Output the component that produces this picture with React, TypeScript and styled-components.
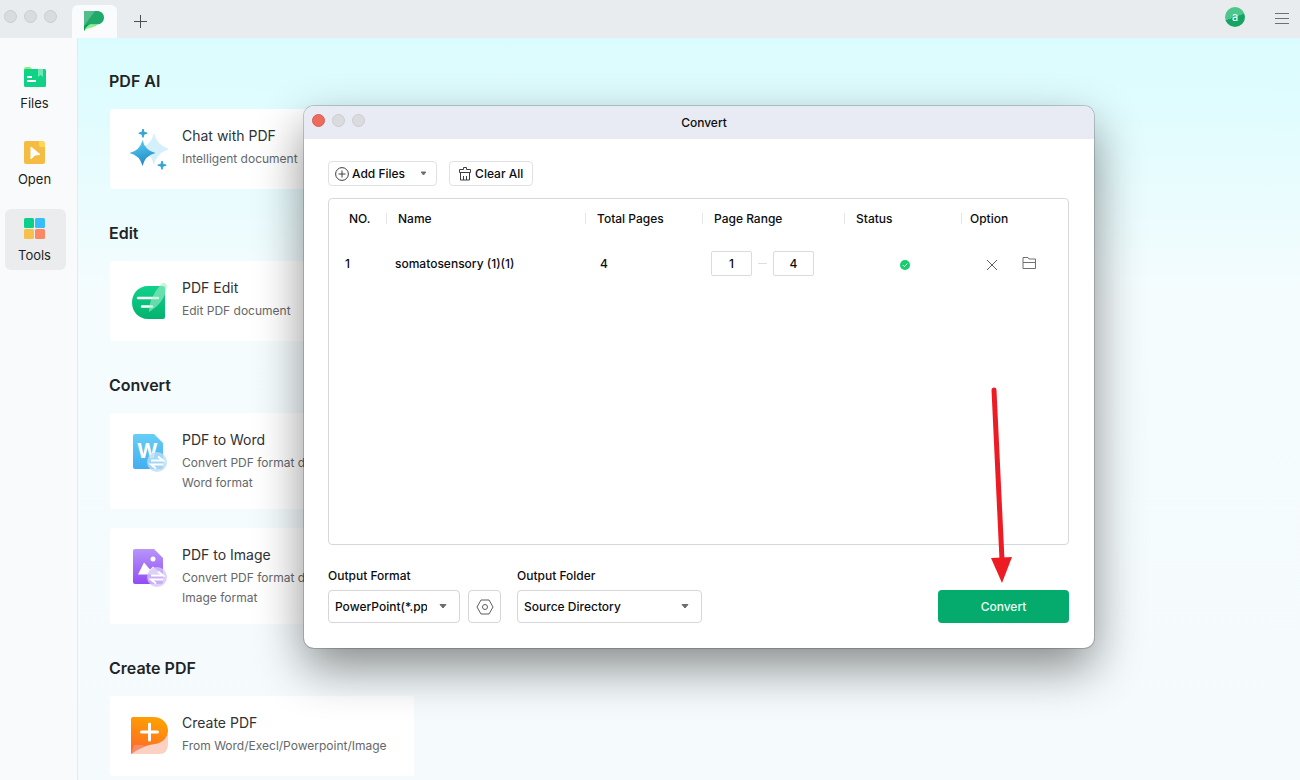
import React from 'react';
import styled, { createGlobalStyle } from 'styled-components';

const GlobalStyle = createGlobalStyle`
  *, *::before, *::after { box-sizing: border-box; }
  body { margin: 0; overflow: hidden; }
  body, button, input, select {
    font-family: Inter, "Liberation Sans", sans-serif;
    font-size: 12px;
    color: #0c0d0e;
  }
  button { cursor: pointer; }
`;

const Window = styled.div`
  position: relative;
  display: flex;
  flex-direction: column;
  height: 100vh;
  overflow: hidden;
`;

const TitleBar = styled.header`
  display: flex;
  align-items: flex-end;
  flex: 0 0 38px;
  height: 38px;
  padding: 0 10px 0 4px;
  background: #e9ecee;
`;

const WindowDots = styled.div`
  display: flex;
  align-self: flex-start;
  gap: 7px;
  width: 68px;
  padding-top: 10px;
`;

const Dot = styled.button<{ $close?: boolean }>`
  width: 13px;
  height: 13px;
  padding: 0;
  border: 1px solid ${p => (p.$close ? '#dd5b52' : '#cbcdd0')};
  border-radius: 50%;
  background: ${p => (p.$close ? '#ed6a5f' : '#d9dbde')};
`;

const HomeTab = styled.button`
  display: flex;
  align-items: center;
  justify-content: center;
  width: 45px;
  height: 33px;
  padding: 0 2px 2px 0;
  border: 0;
  border-radius: 6px 6px 0 0;
  background: #f9fbfd;
`;

const BarButton = styled.button`
  display: flex;
  align-items: center;
  justify-content: center;
  width: 16px;
  height: 36px;
  padding: 0;
  border: 0;
  background: none;
`;

const NewTab = styled(BarButton)`
  height: 34px;
  margin-left: 15px;
`;

const Account = styled.button`
  width: 20px;
  height: 20px;
  margin: 0 29px 11px auto;
  padding: 0;
  border: 0;
  border-radius: 50%;
  background: linear-gradient(160deg, #4cc68c 50%, #17a463 50%);
  color: #fff;
  font-size: 11px;
  line-height: 20px;
`;

const Body = styled.div`
  display: flex;
  flex: 1;
  min-height: 0;
`;

const Sidebar = styled.nav`
  display: flex;
  flex-direction: column;
  flex: 0 0 78px;
  gap: 15px;
  padding: 19px 0 0 5px;
  border-right: 1px solid #e6eaed;
  background: #f9fafc;
`;

const NavItem = styled.button<{ $active?: boolean }>`
  display: flex;
  flex-direction: column;
  align-items: center;
  gap: 3px;
  width: 61px;
  height: 61px;
  padding: 7px 2px 0 0;
  border: 0;
  border-radius: 6px;
  background: ${p => (p.$active ? '#ebecee' : 'transparent')};
  font-size: 13px;
  line-height: 20px;
  color: #1c1e20;
`;

const Main = styled.main`
  flex: 1;
  padding: 31px 30px 0 31px;
  overflow: hidden;
  background: linear-gradient(#dbfcfe 0, #dffcfe 60px, #f5fcfe 260px, #f5fbfd 100%);
`;

const Section = styled.section`
  margin-bottom: 32px;
`;

const SectionTitle = styled.h2`
  margin: 0 0 16px;
  font-size: 16px;
  font-weight: 600;
  line-height: 24px;
  color: #1f2427;
`;

const CardList = styled.div`
  display: flex;
  flex-direction: column;
  gap: 19px;
  padding-left: 1px;
`;

const Card = styled.a`
  display: flex;
  gap: 14px;
  width: 304px;
  min-height: 80px;
  padding: 16px 10px 16px 18px;
  border-radius: 3px;
  background: #fff;
  text-decoration: none;
`;

const CardText = styled.div`
  flex: 1;
`;

const CardTitle = styled.h3`
  margin: 0 0 2px;
  font-size: 14px;
  font-weight: 400;
  line-height: 22px;
  color: #2f3235;
`;

const CardDescription = styled.p`
  margin: 0;
  font-size: 12px;
  line-height: 20px;
  color: #65686b;
`;

const Dialog = styled.div`
  position: absolute;
  top: 106px;
  left: 304px;
  right: 206px;
  border-radius: 10px;
  background: #fff;
  box-shadow: 0 0 0 1px rgba(0, 0, 0, 0.18), 0 20px 48px rgba(0, 0, 0, 0.45);
`;

const DialogBar = styled.div`
  display: grid;
  grid-template-columns: 1fr auto 1fr;
  height: 33px;
  padding: 0 8px;
  border-radius: 10px 10px 0 0;
  background: #e8ebf3;
`;

const DialogDots = styled(WindowDots)`
  padding-top: 8px;
`;

const DialogTitle = styled.h1`
  margin: 0 0 0 10px;
  font-size: 12px;
  font-weight: 500;
  line-height: 33px;
`;

const DialogBody = styled.div`
  padding: 22px 25px 25px 24px;
`;

const Toolbar = styled.div`
  display: flex;
  gap: 12px;
  margin-bottom: 12px;
`;

const ToolButton = styled.button<{ $menu?: boolean }>`
  display: flex;
  align-items: center;
  gap: 3px;
  height: 25px;
  padding: 0 9px 0 ${p => (p.$menu ? '6px' : '8px')};
  border: 1px solid #dfe1e5;
  border-radius: 4px;
  background: #fff;
  font-weight: 500;
  white-space: nowrap;

  & > svg:last-child:not(:first-child) {
    margin-left: 12px;
  }
`;

const FileBox = styled.div`
  height: 347px;
  border: 1px solid #d6d8da;
  border-radius: 4px;
`;

const FileTable = styled.table`
  width: 100%;
  table-layout: fixed;
  border-collapse: collapse;
`;

const HeadCell = styled.th<{ $width?: number; $pad?: number }>`
  width: ${p => (p.$width ? `${p.$width}px` : 'auto')};
  height: 38px;
  padding: 0;
  font-weight: 500;
  text-align: left;

  & > span {
    display: block;
    padding-left: ${p => p.$pad ?? 11}px;
    border-left: 1px solid #e4e5e7;
    line-height: 11px;
  }
  &:first-child > span {
    border-left-color: transparent;
  }
`;

const Cell = styled.td<{ $pad?: number }>`
  height: 52px;
  padding: 0 0 0 ${p => p.$pad ?? 9}px;
  font-weight: 500;
`;

const Range = styled.div`
  display: flex;
  align-items: center;
  gap: 6px;
`;

const RangeDash = styled.span`
  width: 9px;
  height: 1px;
  background: #dcdee0;
`;

const PageInput = styled.input`
  width: 41px;
  height: 25px;
  padding: 0;
  border: 1px solid #d9dbdd;
  border-radius: 2px;
  background: #fff;
  text-align: center;
  font-weight: 500;
`;

const StatusMark = styled.div`
  display: flex;
  justify-content: center;
  padding-top: 3px;
`;

const RowActions = styled.div`
  display: flex;
  align-items: flex-end;
  gap: 24px;
`;

const IconButton = styled.button`
  display: flex;
  padding: 0;
  border: 0;
  background: none;
`;

const OutputRow = styled.div`
  display: flex;
  align-items: flex-end;
  margin-top: 21px;
`;

const Field = styled.div<{ $width: number }>`
  width: ${p => p.$width}px;
`;

const FieldLabel = styled.label`
  display: block;
  margin-bottom: 4px;
  line-height: 20px;
  font-weight: 500;
`;

const SelectBox = styled.div`
  display: grid;
  align-items: center;

  & > * { grid-area: 1 / 1; }
  & > svg {
    justify-self: end;
    margin: 0 13px 2px 0;
    pointer-events: none;
  }
`;

const Select = styled.select`
  appearance: none;
  width: 100%;
  height: 33px;
  padding: 0 32px 0 6px;
  border: 1px solid #d4d6d8;
  border-radius: 4px;
  background: #fff;
  font-weight: 500;
`;

const SettingsButton = styled.button`
  display: flex;
  align-items: center;
  justify-content: center;
  width: 33px;
  height: 33px;
  margin: 0 16px 0 8px;
  padding: 0;
  border: 1px solid #d4d6d8;
  border-radius: 4px;
  background: #fff;
`;

const ConvertButton = styled.button`
  width: 131px;
  height: 33px;
  margin-left: auto;
  border: 0;
  border-radius: 4px;
  background: #04ab6c;
  color: #f0fbf6;
  font-weight: 500;
`;

const Pointer = styled.svg`
  position: absolute;
  right: 80px;
  bottom: 65px;
  pointer-events: none;
`;

const Caret = () => (
  <svg width="8" height="8" viewBox="0 0 8 8" aria-hidden="true">
    <path d="M1 2.500h6L4 6z" fill="#6b6d70" stroke="#6b6d70" strokeWidth="1" strokeLinejoin="round" />
  </svg>
);

const SmallCaret = () => (
  <svg width="7" height="7" viewBox="0 0 7 7" aria-hidden="true">
    <path d="M1.200 2h4.600L3.500 5z" fill="#6b6d70" stroke="#6b6d70" strokeWidth="1" strokeLinejoin="round" />
  </svg>
);

const LogoIcon = () => (
  <svg width="22" height="22" viewBox="0 0 22 22" aria-hidden="true">
    <path d="M5 15l-4 6c3-3 6-3 9-4 2-.500 3-1 4-2z" fill="#86f47c" />
    <path d="M1 1h13c4 0 7 2.500 7 6.500S18 14.500 14 14.500H8c-3 0-5 2.500-7 6.500z" fill="#1faa6b" />
    <path d="M1 1h11L1 16z" fill="#55bd8c" />
    <path d="M1 21V16l7-3c-3 2-5 4-7 8z" fill="#0e9a58" />
  </svg>
);

const FilesIcon = () => (
  <svg width="26" height="26" viewBox="0 0 26 26" aria-hidden="true">
    <path d="M2 5q0-2 2-2h4l2 2v4H2z" fill="#8af07c" />
    <rect x="2" y="5" width="22" height="18" rx="1.500" fill="#10d287" />
    <path d="M16 5h5v8l-2.500-2-2.500 2z" fill="#6fe7b5" />
    <path d="M5 13h5M5 17h9" stroke="#fff" strokeWidth="2" />
  </svg>
);

const OpenIcon = () => (
  <svg width="26" height="26" viewBox="0 0 26 26" aria-hidden="true">
    <path d="M4 1h14l5 5v16q0 2-2 2H4q-2 0-2-2V3q0-2 2-2z" fill="#f5bc43" />
    <path d="M17 1h4q2 0 2 2v4h-4q-2 0-2-2z" fill="#fcd75a" />
    <path d="M9 7l9 7.500-5 .500-4 4z" fill="#fff" stroke="#fff" strokeLinejoin="round" />
  </svg>
);

const ToolsIcon = () => (
  <svg width="26" height="26" viewBox="0 0 26 26" aria-hidden="true">
    <rect x="2" y="2" width="10" height="10" rx="1.500" fill="#0bd08b" />
    <rect x="13" y="2" width="10" height="10" rx="1.500" fill="#37bdf8" />
    <rect x="2" y="13" width="10" height="10" rx="1.500" fill="#f6c04d" />
    <rect x="13" y="13" width="10" height="10" rx="1.500" fill="#fb8763" />
  </svg>
);

const CardSvg = styled.svg`
  flex: none;
  width: 40px;
  height: 44px;
  margin-top: 3px;
`;

const ChatIcon = () => (
  <CardSvg viewBox="0 0 40 44" aria-hidden="true">
    <defs>
      <linearGradient id="spark" x1="0.300" y1="0" x2="0.600" y2="1">
        <stop offset="0" stopColor="#5ccdf0" />
        <stop offset="1" stopColor="#1c86c6" />
      </linearGradient>
    </defs>
    <path d="M26 5q3 13 16 16-13 3-16 16-3-13-16-16 13-3 16-16z" fill="#d5f0fc" />
    <path d="M14.500 12q2.500 10.500 13 13-10.500 2.500-13 13-2.500-10.500-13-13 10.500-2.500 13-13z" fill="url(#spark)" />
    <path d="M15 1l1 3.200 3.200 1-3.200 1-1 3.200-1-3.200-3.200-1 3.200-1z" fill="#30a5d6" stroke="#30a5d6" />
    <path d="M34 33l1 3.200 3.200 1-3.200 1-1 3.200-1-3.200-3.200-1 3.200-1z" fill="#30a5d6" stroke="#30a5d6" />
  </CardSvg>
);

const EditIcon = () => (
  <CardSvg viewBox="0 0 40 44" aria-hidden="true">
    <defs>
      <linearGradient id="edit" x1="0" y1="0" x2="0" y2="1">
        <stop offset="0" stopColor="#0fd18b" />
        <stop offset="1" stopColor="#04b26f" />
      </linearGradient>
    </defs>
    <path d="M20 6h15q2 0 2 2v29q0 2-2 2H20C10 39 4 31 4 22.500S10 6 20 6z" fill="url(#edit)" />
    <path d="M10 18h20M14 26.500h10" stroke="#fff" strokeWidth="2.500" strokeLinecap="round" />
    <path d="M33 4q2-2 4-1t2 4q-2 12-11 20l-7 5q0-7 2-12 4-9 10-16z" fill="#a3edcc" opacity="0.600" />
  </CardSvg>
);

const SwapBadge = ({ tint }: { tint: string }) => (
  <>
    <circle cx="29" cy="30" r="10" fill={tint} opacity="0.800" />
    <path d="M23 28.500h12l-5-4M35 32.500H23l5 4" fill="none" stroke="#fff" strokeWidth="2" />
  </>
);

const WordLetter = styled.text`
  font: 700 20px Inter, "Liberation Sans", sans-serif;
  fill: #fff;
`;

const WordIcon = () => (
  <CardSvg viewBox="0 0 40 44" aria-hidden="true">
    <defs>
      <linearGradient id="word" x1="0" y1="0" x2="0" y2="1">
        <stop offset="0" stopColor="#66cef6" />
        <stop offset="1" stopColor="#43aef0" />
      </linearGradient>
    </defs>
    <path d="M7 2h19l9 9v24q0 2-2 2H7q-2 0-2-2V4q0-2 2-2z" fill="url(#word)" />
    <WordLetter x="9" y="26">W</WordLetter>
    <SwapBadge tint="#b9def5" />
  </CardSvg>
);

const ImageIcon = () => (
  <CardSvg viewBox="0 0 40 44" aria-hidden="true">
    <defs>
      <linearGradient id="image" x1="0" y1="0" x2="0" y2="1">
        <stop offset="0" stopColor="#b796fa" />
        <stop offset="1" stopColor="#924cf5" />
      </linearGradient>
    </defs>
    <path d="M7 2h19l9 9v24q0 2-2 2H7q-2 0-2-2V4q0-2 2-2z" fill="url(#image)" />
    <circle cx="25" cy="12" r="2.500" fill="#fff" />
    <path d="M10 27.500l6-12 6 7 3-3 9 8z" fill="#fff" />
    <SwapBadge tint="#d6c6f8" />
  </CardSvg>
);

const CreateIcon = () => (
  <CardSvg viewBox="0 0 40 44" aria-hidden="true">
    <defs>
      <linearGradient id="create" x1="0.300" y1="0" x2="0" y2="1">
        <stop offset="0" stopColor="#ff9d05" />
        <stop offset="1" stopColor="#fa6428" />
      </linearGradient>
    </defs>
    <path d="M3 39q10-11 20-11 13-1 17-9v10q0 10-9 10z" fill="#fcd0c3" />
    <path d="M5 2h20c9 0 15 6 15 13.500S34 28 27 29C14 31 10 34 3 39V4q0-2 2-2z" fill="url(#create)" />
    <path d="M6 30q5-1 12 1-8 3-15 8z" fill="#f98a68" />
    <path d="M13.500 17h16M21.500 9v16" stroke="#fff" strokeWidth="3" strokeLinecap="round" />
  </CardSvg>
);

const AddIcon = () => (
  <svg width="14" height="14" viewBox="0 0 14 14" fill="none" stroke="#3c3e42" aria-hidden="true">
    <circle cx="7" cy="7" r="6.400" />
    <path d="M7 3.500v7M3.500 7h7" />
  </svg>
);

const ClearIcon = () => (
  <svg width="14" height="14" viewBox="0 0 14 14" fill="none" stroke="#3c3e42" aria-hidden="true">
    <path d="M1.500 5.500v-3h4V.500h3v2h4v3zM2.500 5.500v7.500h9V5.500M5.500 9v4M8.500 9v4" />
  </svg>
);

const DoneIcon = () => (
  <svg width="10" height="10" viewBox="0 0 10 10" role="img" aria-label="Done">
    <circle cx="5" cy="5" r="5" fill="#13cf6d" />
    <path d="M2.800 5l1.600 1.600 2.900-3" fill="none" stroke="#fff" />
  </svg>
);

const RemoveIcon = () => (
  <svg width="12" height="12" viewBox="0 0 12 12" aria-hidden="true">
    <path d="M1 1l10 10M11 1L1 11" stroke="#5e6063" />
  </svg>
);

const FolderIcon = () => (
  <svg width="15" height="15" viewBox="0 0 15 15" fill="none" stroke="#6e7073" aria-hidden="true">
    <path d="M1 12.500V1.500h5l1 1.500h6.500v9.500zM1 6.500h12.500" />
  </svg>
);

const SettingsIcon = () => (
  <svg width="18" height="18" viewBox="0 0 18 18" fill="none" stroke="#5b5d60" aria-hidden="true">
    <path d="M5 2h8l4 7-4 7H5L1 9z" strokeLinejoin="round" />
    <circle cx="9" cy="9" r="2.500" />
  </svg>
);

const navItems = [
  { label: 'Files', icon: <FilesIcon /> },
  { label: 'Open', icon: <OpenIcon /> },
  { label: 'Tools', icon: <ToolsIcon />, active: true },
];

const sections = [
  { title: 'PDF AI', cards: [{ title: 'Chat with PDF', text: 'Intelligent document', icon: <ChatIcon /> }] },
  { title: 'Edit', cards: [{ title: 'PDF Edit', text: 'Edit PDF document', icon: <EditIcon /> }] },
  {
    title: 'Convert',
    cards: [
      { title: 'PDF to Word', text: 'Convert PDF format document to Word\u00a0format', icon: <WordIcon /> },
      { title: 'PDF to Image', text: 'Convert PDF format document to Image\u00a0format', icon: <ImageIcon /> },
    ],
  },
  {
    title: 'Create PDF',
    cards: [{ title: 'Create PDF', text: 'From Word/Execl/Powerpoint/Image', icon: <CreateIcon /> }],
  },
];

const files = [{ no: 1, name: 'somatosensory (1)(1)', pages: 4, from: 1, to: 4 }];

const ConvertDialog = () => (
  <Dialog role="dialog" aria-labelledby="convert-title">
    <DialogBar>
      <DialogDots>
        <Dot $close aria-label="Close dialog" />
        <Dot aria-label="Minimize dialog" />
        <Dot aria-label="Zoom dialog" />
      </DialogDots>
      <DialogTitle id="convert-title">Convert</DialogTitle>
    </DialogBar>
    <DialogBody>
      <Toolbar>
        <ToolButton $menu><AddIcon />Add Files<SmallCaret /></ToolButton>
        <ToolButton><ClearIcon />Clear All</ToolButton>
      </Toolbar>
      <FileBox>
        <FileTable>
          <thead>
            <tr>
              <HeadCell $width={57} $pad={19}><span>NO.</span></HeadCell>
              <HeadCell><span>Name</span></HeadCell>
              <HeadCell $width={117}><span>Total Pages</span></HeadCell>
              <HeadCell $width={142}><span>Page Range</span></HeadCell>
              <HeadCell $width={117}><span>Status</span></HeadCell>
              <HeadCell $width={107} $pad={8}><span>Option</span></HeadCell>
            </tr>
          </thead>
          <tbody>
            {files.map(f => (
              <tr key={f.no}>
                <Cell $pad={16}>{f.no}</Cell>
                <Cell>{f.name}</Cell>
                <Cell $pad={15}>{f.pages}</Cell>
                <Cell>
                  <Range>
                    <PageInput aria-label="From page" defaultValue={f.from} />
                    <RangeDash />
                    <PageInput aria-label="To page" defaultValue={f.to} />
                  </Range>
                </Cell>
                <Cell $pad={4}><StatusMark><DoneIcon /></StatusMark></Cell>
                <Cell $pad={25}>
                  <RowActions>
                    <IconButton aria-label="Remove file"><RemoveIcon /></IconButton>
                    <IconButton aria-label="Open folder"><FolderIcon /></IconButton>
                  </RowActions>
                </Cell>
              </tr>
            ))}
          </tbody>
        </FileTable>
      </FileBox>
      <OutputRow>
        <Field $width={132}>
          <FieldLabel htmlFor="format">Output Format</FieldLabel>
          <SelectBox>
            <Select id="format"><option>PowerPoint(*.pptx)</option></Select>
            <Caret />
          </SelectBox>
        </Field>
        <SettingsButton aria-label="Format settings"><SettingsIcon /></SettingsButton>
        <Field $width={185}>
          <FieldLabel htmlFor="folder">Output Folder</FieldLabel>
          <SelectBox>
            <Select id="folder"><option>Source Directory</option></Select>
            <Caret />
          </SelectBox>
        </Field>
        <ConvertButton>Convert</ConvertButton>
      </OutputRow>
    </DialogBody>
    <Pointer width="24" height="198" viewBox="0 0 24 198" aria-hidden="true">
      <path d="M4 5l8 170" stroke="#ed1c24" strokeWidth="5" strokeLinecap="round" />
      <path d="M1 173l21-1-10 26z" fill="#ed1c24" />
    </Pointer>
  </Dialog>
);

export default function App() {
  return (
    <Window>
      <GlobalStyle />
      <TitleBar>
        <WindowDots>
          <Dot aria-label="Close" />
          <Dot aria-label="Minimize" />
          <Dot aria-label="Zoom" />
        </WindowDots>
        <HomeTab aria-label="Home"><LogoIcon /></HomeTab>
        <NewTab aria-label="New tab">
          <svg width="13" height="13" viewBox="0 0 13 13" aria-hidden="true">
            <path d="M6.500 0v13M0 6.500h13" stroke="#4c4f52" />
          </svg>
        </NewTab>
        <Account>a</Account>
        <BarButton aria-label="Menu">
          <svg width="14" height="14" viewBox="0 0 14 14" aria-hidden="true">
            <path d="M0 .500h14M0 5.500h14M0 10.500h14" stroke="#6e7174" />
          </svg>
        </BarButton>
      </TitleBar>
      <Body>
        <Sidebar>
          {navItems.map(item => (
            <NavItem key={item.label} $active={item.active}>
              {item.icon}
              {item.label}
            </NavItem>
          ))}
        </Sidebar>
        <Main>
          {sections.map(section => (
            <Section key={section.title}>
              <SectionTitle>{section.title}</SectionTitle>
              <CardList>
                {section.cards.map(card => (
                  <Card key={card.title} href="#">
                    {card.icon}
                    <CardText>
                      <CardTitle>{card.title}</CardTitle>
                      <CardDescription>{card.text}</CardDescription>
                    </CardText>
                  </Card>
                ))}
              </CardList>
            </Section>
          ))}
        </Main>
      </Body>
      <ConvertDialog />
    </Window>
  );
}
